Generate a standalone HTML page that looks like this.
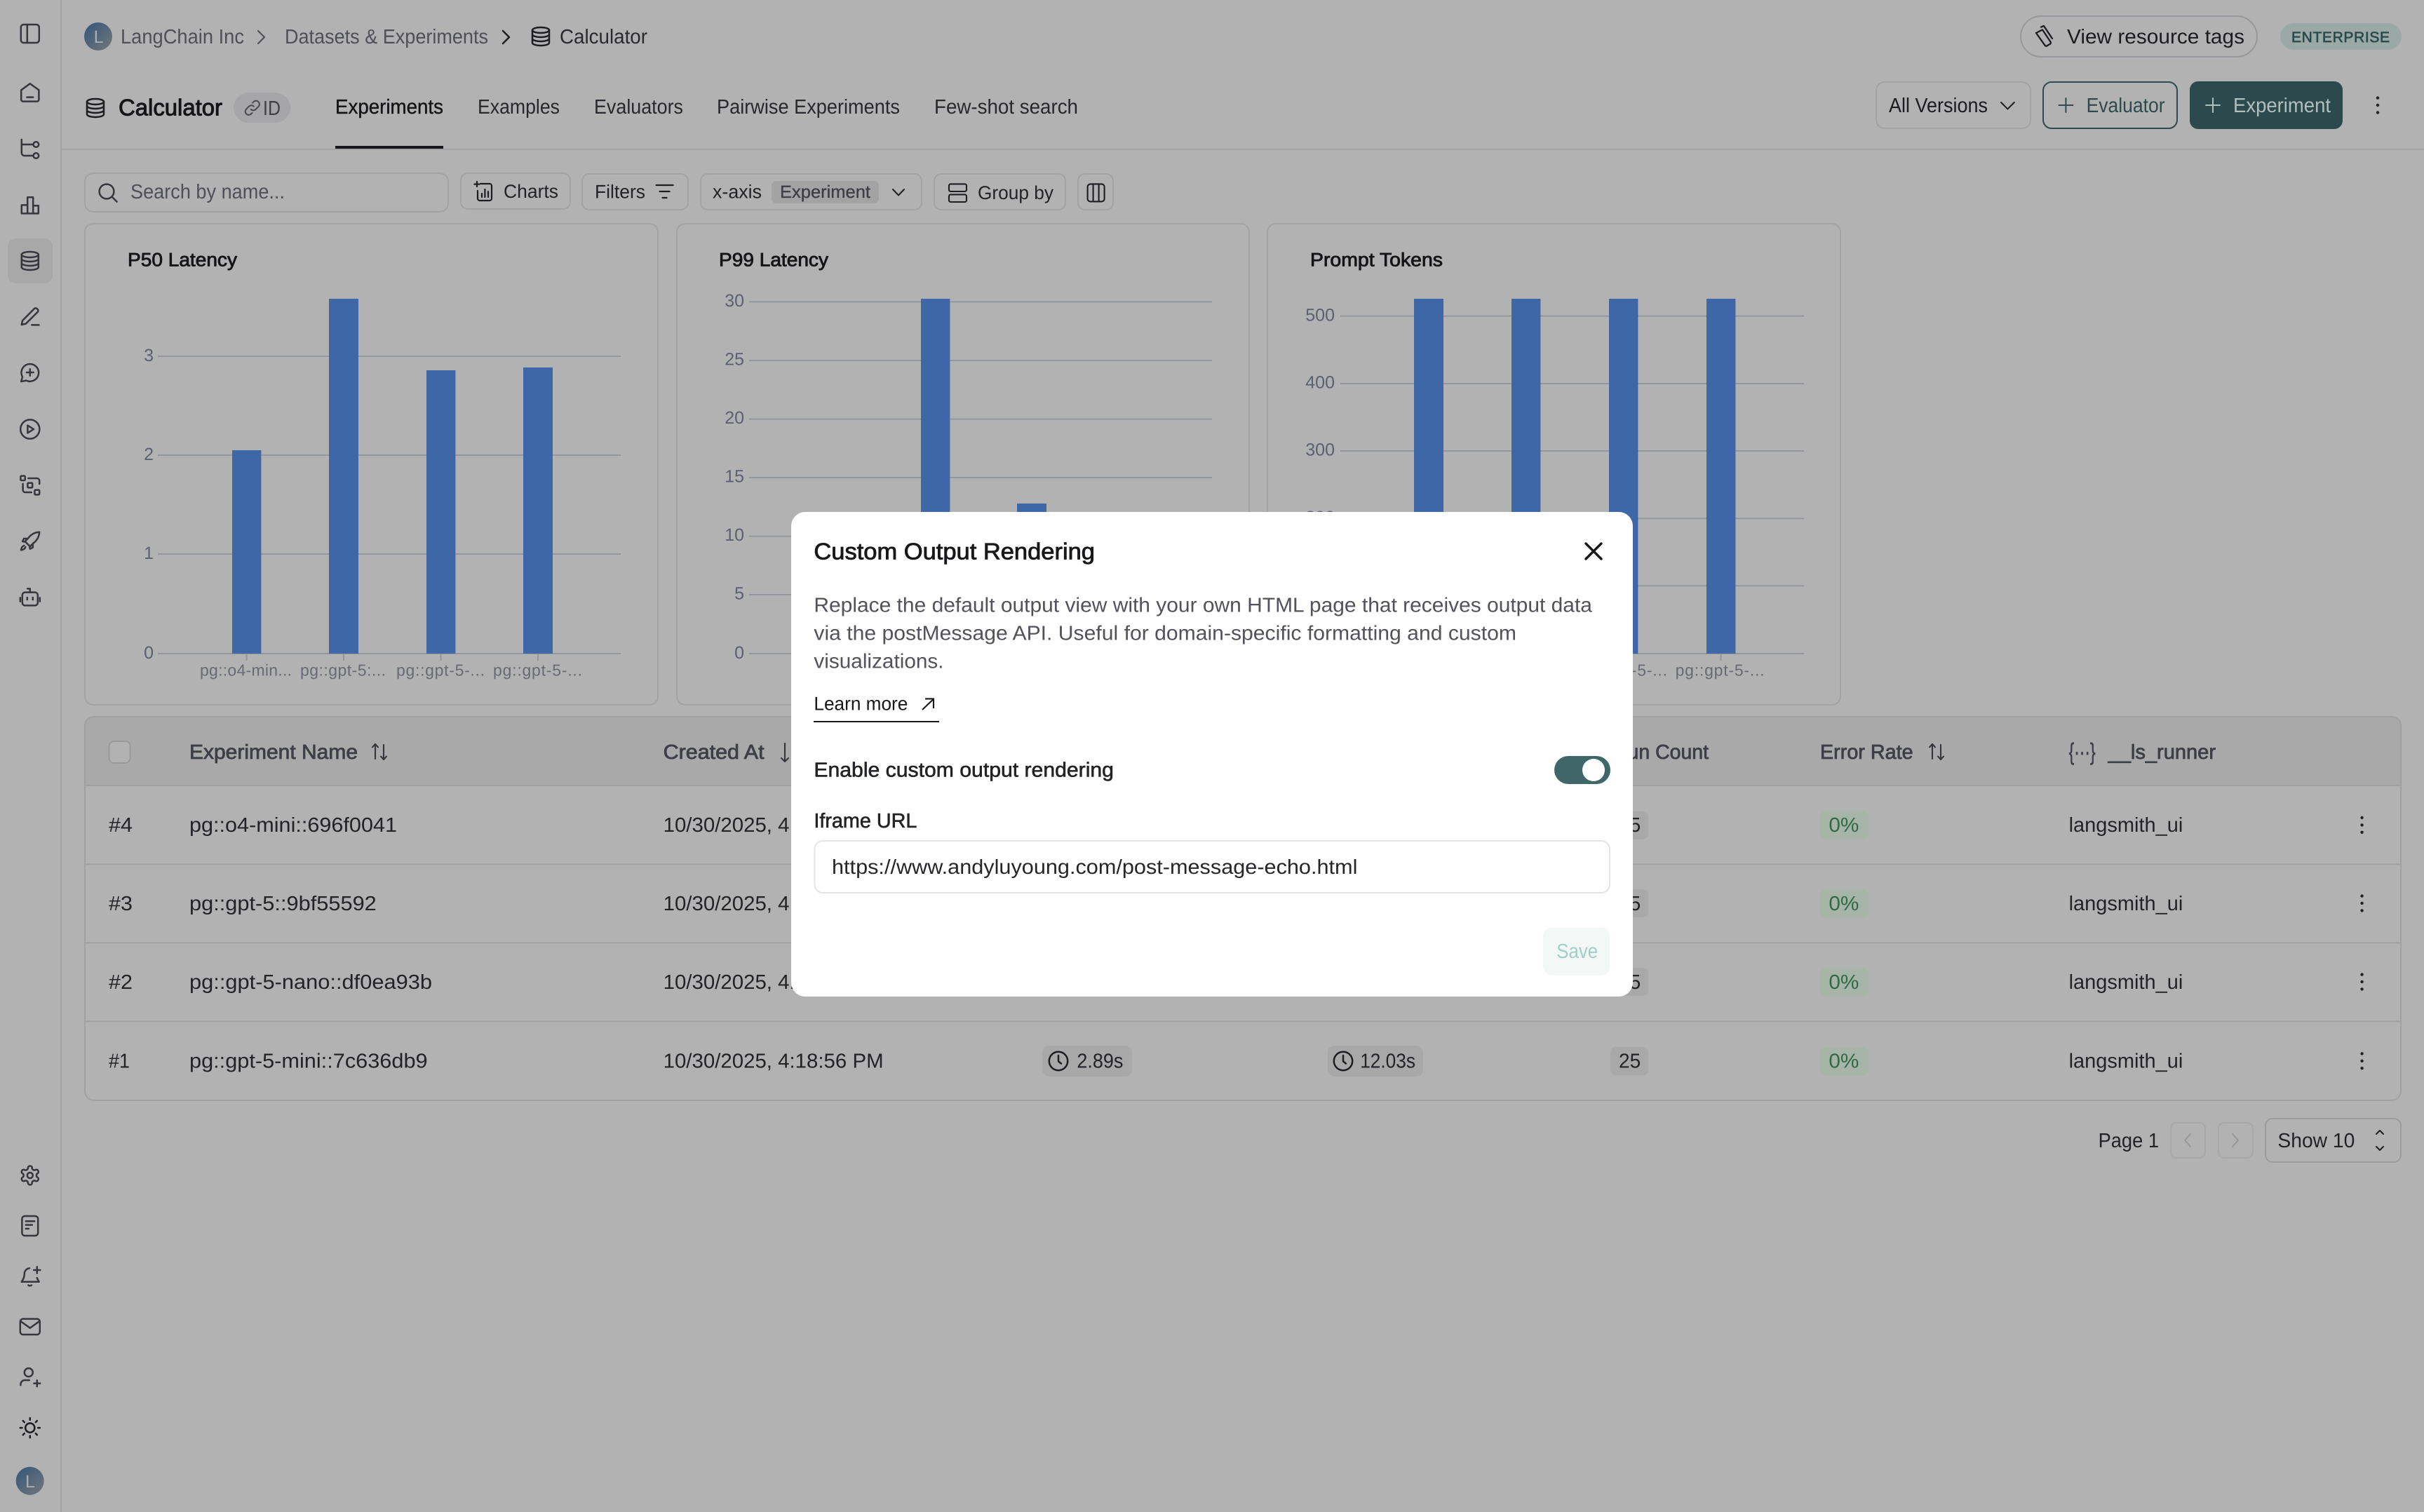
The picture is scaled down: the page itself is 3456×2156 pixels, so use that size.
<!DOCTYPE html>
<html lang="en"><head><meta charset="utf-8"><title>Calculator - Experiments</title>
<style>
html,body{margin:0;padding:0;background:#b2b2b2;width:3456px;height:2156px;overflow:hidden}
svg{display:block}
text{font-family:"Liberation Sans",Arial,sans-serif;font-size:14.5px;text-rendering:geometricPrecision;fill:#232327;white-space:pre}
.i{fill:none;stroke:#36363c;stroke-width:1.25;stroke-linecap:round;stroke-linejoin:round}
.d{stroke:#1e1e22}
.muted{fill:#4f5057}
.th{fill:#3d3e46;stroke:#3d3e46;stroke-width:.4}
.tick{font-size:12.5px;fill:#5b6170}
.xl{font-size:11.5px;fill:#676a72}
.ct{font-size:13.5px;fill:#151518;stroke:#151518;stroke-width:.42}
.grid{stroke:#93969d;stroke-width:1}
.bar{fill:#3e67a8}
.card{fill:none;stroke:#a3a3a5;stroke-width:1}
.btn{fill:#b2b2b2;stroke:#a3a3a6;stroke-width:1}
.pill{fill:#a8a8a9}
</style></head>
<body>
<svg width="3456" height="2156" viewBox="0 0 1728 1078" xmlns="http://www.w3.org/2000/svg">
<defs>
<g id="db"><ellipse cx="8" cy="3.5" rx="6" ry="2"/><path d="M2 3.5v9c0 1.1 2.7 2 6 2s6-.9 6-2v-9M2 6.5c0 1.1 2.7 2 6 2s6-.9 6-2M2 9.5c0 1.1 2.7 2 6 2s6-.9 6-2"/></g>
<g id="sort" style="stroke-width:1.05"><path d="M4.500 13V2.500M2.500 4.700 4.500 2.500l2 2.200M10.500 3v10.500M8.500 11.300l2 2.200 2-2.200"/></g>
<g id="clock"><circle cx="8" cy="8" r="6.600"/><path d="M8 4v4.200l2 1.600"/></g>
<g id="keb"><circle cx="0" cy="-5.200" r="1.100"/><circle cx="0" cy="0" r="1.100"/><circle cx="0" cy="5.200" r="1.100"/></g>
<linearGradient id="av" x1="0" y1="0" x2="1" y2="1"><stop offset="0" stop-color="#34567a"/><stop offset="1" stop-color="#73777b"/></linearGradient>
</defs>
<rect width="1728" height="1078" fill="#b2b2b2"/>

<!-- sidebar -->
<rect x="43" y="0" width="1" height="1078" fill="#a3a3a5"/>
<rect x="5.500" y="170" width="32" height="32" rx="6" fill="#a8a8a9"/>
<g class="i">
<g transform="translate(13.400,16)"><rect x="1.500" y="1.500" width="13" height="13" rx="2"/><path d="M6 1.500v13"/></g>
<g transform="translate(13.400,58)"><path d="M1.700 6.200 8 1.600l6.300 4.600V13a1.300 1.300 0 0 1-1.300 1.300H3A1.300 1.300 0 0 1 1.700 13zM5.800 11.300h4.400"/></g>
<g transform="translate(13.400,98)"><path d="M2 1.500V11a2 2 0 0 0 2 2h6.300M2 5h8.300"/><circle cx="12.300" cy="5" r="1.900"/><circle cx="12.300" cy="13" r="1.900"/></g>
<g transform="translate(13.400,138)"><path d="M2 14V8.200h4.200V14M6.200 14V2.600h4V14M10.200 14V8.600H14V14M2 14.200h12"/></g>
<use href="#db" transform="translate(13.400,178)"/>
<g transform="translate(13.400,217.500)"><path d="M2 14l.7-3L11 2.600a1.400 1.400 0 0 1 2 0l.4.400a1.400 1.400 0 0 1 0 2L5 13.300zM9.300 14.200h5"/></g>
<g transform="translate(13.400,257.500)"><path d="M8 2a6.200 6.200 0 1 1-2.700 11.800L1.700 14.500l.9-3.300A6.200 6.200 0 0 1 8 2zM8 5.600v4.800M5.600 8h4.800"/></g>
<g transform="translate(13.400,298)"><circle cx="8" cy="8" r="6.800"/><path d="M6.300 5.300v5.400l4.300-2.700z"/></g>
<g transform="translate(13.400,338)"><rect x="1.300" y="1.300" width="3.200" height="3.200" rx=".6"/><rect x="6.300" y="6.300" width="3.400" height="3.400" rx=".6"/><rect x="11.300" y="11.300" width="3.400" height="3.400" rx=".6"/><path d="M6.800 3H13a1.700 1.700 0 0 1 1.700 1.700V7M2.900 7v4.400A1.700 1.700 0 0 0 4.600 13H9"/></g>
<g transform="translate(13.400,378)"><path d="M14.700 1.300c-3.500.2-6.100 1.700-8.100 4.500L4.400 8l3.600 3.600 2.200-2.200c2.800-2 4.300-4.600 4.500-8.100zM6.300 6H3.600L2.600 8 4.800 8.400M10 9.800v2.600l-2 1-.3-2M3.800 11c-1.200.4-2 1.400-2.200 3.200 1.800-.2 2.800-1 3.200-2.200"/></g>
<g transform="translate(13.400,417.500)"><rect x="2.500" y="4.800" width="11" height="9.400" rx="2"/><path d="M8 4.800V2.200M6.200 2.200H8M1 8.700v2.600M15 8.700v2.600M6 8.500v1.500M10 8.500v1.500"/></g>
<g transform="translate(13.400,830) scale(.667)" style="stroke-width:1.900"><path d="M12.220 2h-.44a2 2 0 0 0-2 2v.18a2 2 0 0 1-1 1.730l-.43.25a2 2 0 0 1-2 0l-.15-.08a2 2 0 0 0-2.730.73l-.22.38a2 2 0 0 0 .73 2.730l.15.1a2 2 0 0 1 1 1.720v.51a2 2 0 0 1-1 1.740l-.15.09a2 2 0 0 0-.73 2.730l.22.38a2 2 0 0 0 2.730.73l.15-.08a2 2 0 0 1 2 0l.43.25a2 2 0 0 1 1 1.730V20a2 2 0 0 0 2 2h.44a2 2 0 0 0 2-2v-.18a2 2 0 0 1 1-1.730l.43-.25a2 2 0 0 1 2 0l.15.08a2 2 0 0 0 2.730-.73l.22-.39a2 2 0 0 0-.73-2.730l-.15-.08a2 2 0 0 1-1-1.740v-.5a2 2 0 0 1 1-1.740l.15-.09a2 2 0 0 0 .73-2.730l-.22-.38a2 2 0 0 0-2.730-.73l-.15.08a2 2 0 0 1-2 0l-.43-.25a2 2 0 0 1-1-1.730V4a2 2 0 0 0-2-2z"/><circle cx="12" cy="12" r="3"/></g>
<g transform="translate(13.400,866)"><rect x="2.300" y="1" width="11.400" height="14" rx="2"/><path d="M5 4.700h6.200M5 7.300h4.500M5 10h2"/></g>
<g transform="translate(13.400,902)"><path d="M7.600 2.200A4 4 0 0 0 4 6.300c0 3-1.300 4.300-2 5.600h12.400c-.5-.9-1-1.600-1.400-2.800M6.800 14.300c.5.500 1.700.500 2.300 0M10.700 3.500h4.600M13 1.200v4.600"/></g>
<g transform="translate(13.400,938)"><rect x="1" y="2.300" width="14" height="11.200" rx="2"/><path d="M1.300 4 8 8.800 14.700 4"/></g>
<g transform="translate(13.400,974)"><circle cx="7" cy="4.500" r="3"/><path d="M1.300 13.500V13a3 3 0 0 1 3-3h3.200M10.800 12.300h4.400M13 10.100v4.400"/></g>
<g transform="translate(13.400,1010)" style="stroke:#1b1b1f"><circle cx="8" cy="8" r="3.300"/><path d="M8 1v1.300M8 13.700V15M1 8h1.300M13.700 8H15M3 3l1 1M12 12l1 1M3 13l1-1M12 4l1-1"/></g>
</g>
<circle cx="21.350" cy="1055.800" r="10" fill="url(#av)"/>
<text x="18" y="1060.500" style="font-size:12.500px;fill:#a9adb3">L</text>

<!-- breadcrumb -->
<circle cx="70" cy="26" r="10" fill="url(#av)"/>
<text x="66.800" y="30.500" style="font-size:12.500px;fill:#a9adb3">L</text>
<text class="muted" x="86" y="31" textLength="88" lengthAdjust="spacingAndGlyphs">LangChain Inc</text>
<path class="i" style="stroke:#4f5057;stroke-width:1.100" d="M184 22l4.500 4.500-4.500 4.500"/>
<text class="muted" x="203" y="31" textLength="145" lengthAdjust="spacingAndGlyphs">Datasets &amp; Experiments</text>
<path class="i d" d="M358.500 22l4.500 4.500-4.500 4.500"/>
<use href="#db" class="i d" transform="translate(377.500,18)"/>
<text x="399" y="31" textLength="62.500" lengthAdjust="spacingAndGlyphs" style="fill:#2a2a2e">Calculator</text>

<!-- top right -->
<rect class="btn" x="1440.500" y="11.500" width="168.500" height="29" rx="14.500" style="stroke:#98989c"/>
<g class="i d" transform="translate(1449,18)" style="stroke-width:1.150"><path d="M2.500 5.500 7 3.200l5.800 8.700a1 1 0 0 1-.3 1.400l-2.300 1.400a1 1 0 0 1-1.400-.3zM6 1.300l2-.8 6 9"/></g>
<text x="1473.500" y="31" textLength="126.500" lengthAdjust="spacingAndGlyphs" style="fill:#1c1c20">View resource tags</text>
<rect x="1625.500" y="16.500" width="86.500" height="19" rx="9.500" fill="#9aa9a6"/>
<text x="1633.500" y="30" textLength="70" lengthAdjust="spacing" style="font-size:10.500px;fill:#2b4a4c;stroke:#2b4a4c;stroke-width:.35">ENTERPRISE</text>

<!-- title row -->
<use href="#db" class="i d" transform="translate(60,69)"/>
<text x="84.500" y="82.300" textLength="74" lengthAdjust="spacingAndGlyphs" style="font-size:16.500px;fill:#151518;stroke:#151518;stroke-width:.5">Calculator</text>
<rect x="166.500" y="66" width="40.500" height="21.500" rx="10.750" fill="#a6a6a8"/>
<g class="i" transform="translate(173.500,70.500) scale(.8)" style="stroke:#4a4a50"><path d="M6.700 9.300a3 3 0 0 0 4.300 0l2.400-2.400a3 3 0 0 0-4.300-4.300l-.9.900M9.300 6.700a3 3 0 0 0-4.300 0L2.600 9.100a3 3 0 0 0 4.300 4.300l.9-.9"/></g>
<text x="187.500" y="82" textLength="12.500" lengthAdjust="spacingAndGlyphs" style="fill:#3e3e44">ID</text>

<text x="239" y="81" textLength="77" lengthAdjust="spacingAndGlyphs" style="fill:#141417;stroke:#141417;stroke-width:.2">Experiments</text>
<text x="340.500" y="81" textLength="58.500" lengthAdjust="spacingAndGlyphs" style="fill:#28282c">Examples</text>
<text x="423.500" y="81" textLength="63.500" lengthAdjust="spacingAndGlyphs" style="fill:#28282c">Evaluators</text>
<text x="511" y="81" textLength="130.500" lengthAdjust="spacingAndGlyphs" style="fill:#28282c">Pairwise Experiments</text>
<text x="666" y="81" textLength="102.500" lengthAdjust="spacingAndGlyphs" style="fill:#28282c">Few-shot search</text>
<rect x="239" y="104" width="77" height="2" fill="#16161a"/>
<rect x="44" y="106" width="1684" height="1" fill="#a3a3a5"/>

<rect class="btn" x="1337.500" y="58.500" width="110" height="33" rx="6"/>
<text x="1346.500" y="80" textLength="70.500" lengthAdjust="spacingAndGlyphs" style="fill:#1c1c20">All Versions</text>
<path class="i d" style="stroke-width:1" d="M1426.500 73l4.700 4.700 4.700-4.700"/>
<rect x="1456.500" y="58.500" width="95.500" height="33" rx="6" fill="none" stroke="#2d4a4c" stroke-width="1"/>
<path class="i" style="stroke:#2d4a4c;stroke-width:1" d="M1472.700 70v10M1467.700 75h10"/>
<text x="1487.300" y="80" textLength="56" lengthAdjust="spacingAndGlyphs" style="fill:#2d4a4c">Evaluator</text>
<rect x="1561" y="58" width="109" height="34" rx="6" fill="#2c4a4d"/>
<path class="i" style="stroke:#acc0bd;stroke-width:1" d="M1577.500 70v10M1572.500 75h10"/>
<text x="1592" y="80" textLength="69.500" lengthAdjust="spacingAndGlyphs" style="fill:#b0bfbd">Experiment</text>
<use href="#keb" transform="translate(1695,75)" fill="#222226"/>

<!-- toolbar -->
<rect class="btn" x="60.500" y="123.500" width="259" height="27.500" rx="6"/>
<g class="i" transform="translate(69,129.500)"><circle cx="7" cy="7" r="5.200"/><path d="M11 11l3.300 3.300"/></g>
<text class="muted" x="93" y="141.500" textLength="110" lengthAdjust="spacingAndGlyphs">Search by name...</text>
<rect class="btn" x="328.500" y="123.500" width="78" height="25.500" rx="5"/>
<g class="i d" transform="translate(337,128.500)" style="stroke-width:1.100"><path d="M5.500 2.500H12a1.500 1.500 0 0 1 1.500 1.500v9a1.500 1.500 0 0 1-1.500 1.500H5a1.500 1.500 0 0 1-1.500-1.500V7.500M3 1v3.500M1.200 2.800h3.500M6.500 12V9.500M8.700 12V6.500M11 12V8"/></g>
<text x="359" y="141" textLength="39" lengthAdjust="spacingAndGlyphs" style="font-size:13.500px;fill:#232327">Charts</text>
<rect class="btn" x="415" y="124" width="75.500" height="25.500" rx="5"/>
<text x="424" y="141.300" textLength="36" lengthAdjust="spacingAndGlyphs" style="font-size:13.500px;fill:#232327">Filters</text>
<path class="i d" style="stroke-width:1.100" d="M467.800 132h12M470.300 136.500h7M472.300 141h3"/>
<rect class="btn" x="499.500" y="124" width="157.500" height="25.500" rx="5"/>
<text x="508" y="141.300" textLength="35" lengthAdjust="spacingAndGlyphs" style="font-size:13.500px;fill:#232327">x-axis</text>
<rect x="550" y="129" width="76.500" height="16" rx="3.500" fill="#a3a3a4"/>
<text x="556" y="141" textLength="64.500" lengthAdjust="spacingAndGlyphs" style="font-size:12.500px;fill:#3e3e44;stroke:#3e3e44;stroke-width:.18">Experiment</text>
<path class="i d" style="stroke-width:1" d="M636.500 135l4 4.200 4-4.200"/>
<rect class="btn" x="666" y="124" width="93.500" height="25.500" rx="5"/>
<g class="i d" style="stroke-width:1.050"><rect x="676.500" y="131.200" width="12.500" height="5.300" rx="1.200"/><rect x="676.500" y="138.700" width="12.500" height="5.300" rx="1.200"/></g>
<text x="697" y="142" textLength="54" lengthAdjust="spacingAndGlyphs" style="font-size:13.500px;fill:#232327">Group by</text>
<rect class="btn" x="768.500" y="124" width="25" height="25.500" rx="5"/>
<g class="i d" style="stroke-width:1.050"><rect x="775.300" y="131.200" width="12" height="12.500" rx="2"/><path d="M779.300 131.200v12.500M783.300 131.200v12.500"/></g>

<!-- chart cards -->
<rect class="card" x="60.500" y="159.500" width="408.500" height="343" rx="6"/>
<rect class="card" x="482.500" y="159.500" width="408" height="343" rx="6"/>
<rect class="card" x="903.500" y="159.500" width="408.500" height="343" rx="6"/>

<!-- chart 1 -->
<text class="ct" x="91" y="189.800" textLength="78" lengthAdjust="spacingAndGlyphs">P50 Latency</text>
<g class="grid"><path d="M112.500 254H442.500M112.500 324.500H442.500M112.500 395H442.500M112.500 466H442.500M175.750 466v5M245 466v5M314.250 466v5M383.500 466v5"/></g>
<g text-anchor="end"><text class="tick" x="109.500" y="257.500">3</text><text class="tick" x="109.500" y="328">2</text><text class="tick" x="109.500" y="398.500">1</text><text class="tick" x="109.500" y="469.500">0</text></g>
<rect class="bar" x="165.500" y="321" width="20.700" height="145"/>
<rect class="bar" x="234.500" y="213" width="21" height="253"/>
<rect class="bar" x="304" y="264" width="20.700" height="202"/>
<rect class="bar" x="373" y="262" width="21" height="204"/>
<text class="xl" x="142.500" y="481.800" textLength="65.500" lengthAdjust="spacing">pg::o4-min...</text>
<text class="xl" x="214" y="481.800" textLength="61" lengthAdjust="spacing">pg::gpt-5:...</text>
<text class="xl" x="282.500" y="481.800" textLength="63" lengthAdjust="spacing">pg::gpt-5-...</text>
<text class="xl" x="351.500" y="481.800" textLength="63.500" lengthAdjust="spacing">pg::gpt-5-...</text>

<!-- chart 2 -->
<text class="ct" x="512.500" y="189.800" textLength="78" lengthAdjust="spacingAndGlyphs">P99 Latency</text>
<g class="grid"><path d="M534 215.200H864M534 257H864M534 298.800H864M534 340.500H864M534 382.300H864M534 424H864M534 466H864"/></g>
<g text-anchor="end"><text class="tick" x="530.500" y="218.500">30</text><text class="tick" x="530.500" y="260.300">25</text><text class="tick" x="530.500" y="302">20</text><text class="tick" x="530.500" y="343.800">15</text><text class="tick" x="530.500" y="385.600">10</text><text class="tick" x="530.500" y="427.300">5</text><text class="tick" x="530.500" y="469.500">0</text></g>
<rect class="bar" x="656.500" y="213" width="20.700" height="253"/>
<rect class="bar" x="725" y="359" width="21" height="107"/>

<!-- chart 3 -->
<text class="ct" x="934" y="189.800" textLength="94.500" lengthAdjust="spacingAndGlyphs">Prompt Tokens</text>
<g class="grid"><path d="M955.500 225.300H1286M955.500 273.500H1286M955.500 321.500H1286M955.500 369.700H1286M955.500 417.700H1286M955.500 466H1286M1226.700 466v5"/></g>
<g text-anchor="end"><text class="tick" x="951.500" y="228.700">500</text><text class="tick" x="951.500" y="276.800">400</text><text class="tick" x="951.500" y="324.800">300</text><text class="tick" x="951.500" y="373">200</text></g>
<rect class="bar" x="1008" y="213" width="21" height="253"/>
<rect class="bar" x="1077.500" y="213" width="20.700" height="253"/>
<rect class="bar" x="1147" y="213" width="20.700" height="253"/>
<rect class="bar" x="1216.500" y="213" width="20.700" height="253"/>
<text class="xl" x="1125" y="481.800" textLength="63.500" lengthAdjust="spacing">pg::gpt-5-...</text>
<text class="xl" x="1194.300" y="481.800" textLength="63.500" lengthAdjust="spacing">pg::gpt-5-...</text>

<!-- table -->
<path d="M60.500 560V517.500a6.500 6.500 0 0 1 6.500-6.500H1705a6.500 6.500 0 0 1 6.500 6.500V560z" fill="#a9a9a9"/>
<rect x="60.500" y="511" width="1651" height="273.500" rx="6.500" fill="none" stroke="#a1a1a3" stroke-width="1"/>
<g fill="#a1a1a3"><rect x="60.500" y="559.500" width="1651" height="1"/><rect x="60.500" y="615.700" width="1651" height="1"/><rect x="60.500" y="671.700" width="1651" height="1"/><rect x="60.500" y="727.700" width="1651" height="1"/></g>
<rect x="77.800" y="528.500" width="15" height="15.500" rx="3.500" fill="#b2b2b2" stroke="#9a9a9c" stroke-width="1"/>
<text class="th" x="135" y="541" textLength="120" lengthAdjust="spacingAndGlyphs">Experiment Name</text>
<use href="#sort" class="i" transform="translate(263,528)"/>
<text class="th" x="472.800" y="541" textLength="72" lengthAdjust="spacingAndGlyphs">Created At</text>
<path class="i" style="stroke-width:1.050" d="M559.500 530v13M557 540.500l2.500 2.500 2.500-2.500"/>
<text class="th" x="1150" y="541" textLength="68" lengthAdjust="spacingAndGlyphs">Run Count</text>
<text class="th" x="1297.500" y="541" textLength="66.300" lengthAdjust="spacingAndGlyphs">Error Rate</text>
<use href="#sort" class="i" transform="translate(1373,528)"/>
<text class="th" x="1474.800" y="541.800" textLength="19" lengthAdjust="spacingAndGlyphs" style="font-size:17px;stroke-width:.3">{···}</text>
<text class="th" x="1502.800" y="541" textLength="76.700" lengthAdjust="spacingAndGlyphs">__ls_runner</text>

<!-- rows -->
<g>
<text x="77.500" y="593" textLength="17" lengthAdjust="spacingAndGlyphs">#4</text>
<text x="135" y="593" textLength="148" lengthAdjust="spacingAndGlyphs">pg::o4-mini::696f0041</text>
<text x="472.800" y="593" textLength="157" lengthAdjust="spacingAndGlyphs">10/30/2025, 4:18:56 PM</text>
<text x="77.500" y="649" textLength="17" lengthAdjust="spacingAndGlyphs">#3</text>
<text x="135" y="649" textLength="133.400" lengthAdjust="spacingAndGlyphs">pg::gpt-5::9bf55592</text>
<text x="472.800" y="649" textLength="157" lengthAdjust="spacingAndGlyphs">10/30/2025, 4:18:56 PM</text>
<text x="77.500" y="705" textLength="17" lengthAdjust="spacingAndGlyphs">#2</text>
<text x="135" y="705" textLength="173" lengthAdjust="spacingAndGlyphs">pg::gpt-5-nano::df0ea93b</text>
<text x="472.800" y="705" textLength="157" lengthAdjust="spacingAndGlyphs">10/30/2025, 4:18:56 PM</text>
<text x="77.500" y="761.300" textLength="15" lengthAdjust="spacingAndGlyphs">#1</text>
<text x="135" y="761.300" textLength="169.800" lengthAdjust="spacingAndGlyphs">pg::gpt-5-mini::7c636db9</text>
<text x="472.800" y="761.300" textLength="157" lengthAdjust="spacingAndGlyphs">10/30/2025, 4:18:56 PM</text>
</g>
<rect class="pill" x="743" y="745.500" width="64" height="22" rx="5"/>
<use href="#clock" class="i d" transform="translate(746.500,748.500)"/>
<text x="767.700" y="761.300" textLength="33" lengthAdjust="spacingAndGlyphs">2.89s</text>
<rect class="pill" x="946.500" y="745.500" width="68" height="22" rx="5"/>
<use href="#clock" class="i d" transform="translate(949.500,748.500)"/>
<text x="969.600" y="761.300" textLength="39.400" lengthAdjust="spacingAndGlyphs">12.03s</text>
<g class="pill"><rect x="1148" y="578.300" width="27" height="20" rx="4"/><rect x="1148" y="634" width="27" height="20" rx="4"/><rect x="1148" y="690" width="27" height="20" rx="4"/><rect x="1148" y="746.300" width="27" height="20.400" rx="4"/></g>
<text x="1154" y="593" textLength="15.600" lengthAdjust="spacingAndGlyphs">25</text>
<text x="1154" y="649" textLength="15.600" lengthAdjust="spacingAndGlyphs">25</text>
<text x="1154" y="705" textLength="15.600" lengthAdjust="spacingAndGlyphs">25</text>
<text x="1154" y="761.300" textLength="15.600" lengthAdjust="spacingAndGlyphs">25</text>
<g fill="#a6b5a7"><rect x="1297.500" y="578.300" width="34.500" height="20" rx="4"/><rect x="1297.500" y="634.300" width="34.500" height="20" rx="4"/><rect x="1297.500" y="690.300" width="34.500" height="20" rx="4"/><rect x="1297.500" y="746.600" width="34.500" height="20" rx="4"/></g>
<text style="fill:#2f6a45" x="1303.700" y="593" textLength="21.500" lengthAdjust="spacingAndGlyphs">0%</text>
<text style="fill:#2f6a45" x="1303.700" y="649" textLength="21.500" lengthAdjust="spacingAndGlyphs">0%</text>
<text style="fill:#2f6a45" x="1303.700" y="705" textLength="21.500" lengthAdjust="spacingAndGlyphs">0%</text>
<text style="fill:#2f6a45" x="1303.700" y="761.300" textLength="21.500" lengthAdjust="spacingAndGlyphs">0%</text>
<text x="1474.800" y="593" textLength="81.400" lengthAdjust="spacingAndGlyphs">langsmith_ui</text>
<text x="1474.800" y="649" textLength="81.400" lengthAdjust="spacingAndGlyphs">langsmith_ui</text>
<text x="1474.800" y="705" textLength="81.400" lengthAdjust="spacingAndGlyphs">langsmith_ui</text>
<text x="1474.800" y="761.300" textLength="81.400" lengthAdjust="spacingAndGlyphs">langsmith_ui</text>
<g fill="#222226"><use href="#keb" transform="translate(1683.800,588.200)"/><use href="#keb" transform="translate(1683.800,644)"/><use href="#keb" transform="translate(1683.800,700)"/><use href="#keb" transform="translate(1683.800,756.400)"/></g>

<!-- pagination -->
<text x="1495.800" y="818" textLength="43.200" lengthAdjust="spacingAndGlyphs">Page 1</text>
<rect x="1547.500" y="800.500" width="24.500" height="25" rx="4" fill="none" stroke="#a8a8aa"/>
<rect x="1581.500" y="800.500" width="24.500" height="25" rx="4" fill="none" stroke="#a8a8aa"/>
<path class="i" style="stroke:#96969a;stroke-width:1" d="M1561.500 808.500l-4 4.500 4 4.500M1591.500 808.500l4 4.500-4 4.500"/>
<rect x="1615" y="797.500" width="96.500" height="31" rx="5" fill="none" stroke="#9c9c9f"/>
<text x="1623.700" y="818" textLength="55" lengthAdjust="spacingAndGlyphs">Show 10</text>
<path class="i d" style="stroke-width:1" d="M1694 808.500l2.500-2.500 2.500 2.500M1694 817.500l2.500 2.500 2.500-2.500"/>

<!-- modal -->
<rect x="564" y="365" width="600" height="345.500" rx="10" fill="#ffffff"/>
<text x="580.200" y="398.800" textLength="200.300" lengthAdjust="spacingAndGlyphs" style="font-size:16.500px;fill:#18181b;stroke:#18181b;stroke-width:.42">Custom Output Rendering</text>
<path d="M1130.500 387.500l11 11M1141.500 387.500l-11 11" stroke="#18181b" stroke-width="1.700" stroke-linecap="round" fill="none"/>
<text style="fill:#52525b" x="580.200" y="436.300" textLength="554.800" lengthAdjust="spacingAndGlyphs">Replace the default output view with your own HTML page that receives output data</text>
<text style="fill:#52525b" x="580.200" y="456.300" textLength="500.800" lengthAdjust="spacingAndGlyphs">via the postMessage API. Useful for domain-specific formatting and custom</text>
<text style="fill:#52525b" x="580.200" y="476.300" textLength="92.600" lengthAdjust="spacingAndGlyphs">visualizations.</text>
<text x="580.200" y="506.300" textLength="67" lengthAdjust="spacingAndGlyphs" style="font-size:13.500px;fill:#18181b">Learn more</text>
<path d="M657.500 506l8-7.600M659.500 498.200h6v6.800" stroke="#18181b" stroke-width="1.050" fill="none"/>
<rect x="580" y="514" width="89.500" height="1" fill="#18181b"/>
<text x="580.200" y="553.800" textLength="213.800" lengthAdjust="spacingAndGlyphs" style="fill:#232327;stroke:#232327;stroke-width:.3">Enable custom output rendering</text>
<rect x="1108" y="539" width="40" height="20" rx="10" fill="#3f6769"/>
<circle cx="1136" cy="549" r="8" fill="#ffffff"/>
<text x="580.200" y="590" textLength="73.500" lengthAdjust="spacingAndGlyphs" style="fill:#232327;stroke:#232327;stroke-width:.3">Iframe URL</text>
<rect x="580.700" y="599.500" width="566.800" height="37" rx="6" fill="#ffffff" stroke="#e4e4e7"/>
<text x="593" y="622.900" textLength="374.700" lengthAdjust="spacingAndGlyphs" style="fill:#26262a">https://www.andyluyoung.com/post-message-echo.html</text>
<rect x="1100" y="661.300" width="47.500" height="34" rx="6" fill="#f3f8f7"/>
<text x="1109.600" y="683" textLength="29.500" lengthAdjust="spacingAndGlyphs" style="fill:#9fcfc8">Save</text>
</svg>
</body></html>
